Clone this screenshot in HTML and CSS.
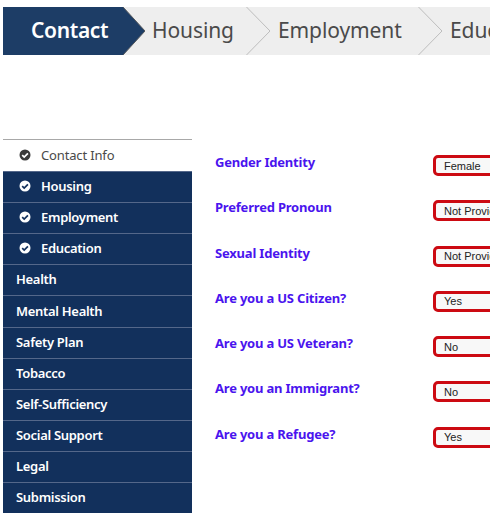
FILE: index.html
```html
<!DOCTYPE html>
<html lang="en">
<head>
<meta charset="utf-8">
<title>Contact</title>
<link rel="stylesheet" href="styles.css">
</head>
<body>
<nav class="steps">
  <div class="step step-active">Contact</div>
  <svg class="tip" width="22" height="48" viewBox="0 0 22 48"><polygon points="0,0 22,24 0,48" fill="#1d3d66"/><polyline points="0,0 22,24 0,48" fill="none" stroke="#55585c" stroke-width="1"/></svg>
  <div class="step step-housing">Housing</div>
  <svg class="chev" width="25" height="48" viewBox="0 0 25 48"><polyline points="0.5,0 24,24 0.5,48" fill="none" stroke="#bdbdbd" stroke-width="1"/></svg>
  <div class="step step-employment">Employment</div>
  <svg class="chev" width="25" height="48" viewBox="0 0 25 48"><polyline points="0.5,0 24,24 0.5,48" fill="none" stroke="#bdbdbd" stroke-width="1"/></svg>
  <div class="step step-education">Education</div>
</nav>
<main class="layout">
  <ul class="side">
    <li class="side-item side-current"><svg class="check" viewBox="0 0 12 12"><circle cx="6" cy="6" r="5.5" fill="#3a3a3a"/><polyline points="3.2,6.2 5.2,8.1 8.9,4.3" fill="none" stroke="#fff" stroke-width="1.7"/></svg>Contact Info</li>
    <li class="side-item"><svg class="check" viewBox="0 0 12 12"><circle cx="6" cy="6" r="5.5" fill="#fff"/><polyline points="3.2,6.2 5.2,8.1 8.9,4.3" fill="none" stroke="#12305c" stroke-width="1.7"/></svg>Housing</li>
    <li class="side-item"><svg class="check" viewBox="0 0 12 12"><circle cx="6" cy="6" r="5.5" fill="#fff"/><polyline points="3.2,6.2 5.2,8.1 8.9,4.3" fill="none" stroke="#12305c" stroke-width="1.7"/></svg>Employment</li>
    <li class="side-item"><svg class="check" viewBox="0 0 12 12"><circle cx="6" cy="6" r="5.5" fill="#fff"/><polyline points="3.2,6.2 5.2,8.1 8.9,4.3" fill="none" stroke="#12305c" stroke-width="1.7"/></svg>Education</li>
    <li class="side-item">Health</li>
    <li class="side-item">Mental Health</li>
    <li class="side-item">Safety Plan</li>
    <li class="side-item">Tobacco</li>
    <li class="side-item">Self-Sufficiency</li>
    <li class="side-item">Social Support</li>
    <li class="side-item">Legal</li>
    <li class="side-item">Submission</li>
  </ul>
  <form class="fields">
    <div class="field"><label class="field-label">Gender Identity</label><select class="field-select"><option>Female</option></select></div>
    <div class="field"><label class="field-label">Preferred Pronoun</label><select class="field-select"><option>Not Provided</option></select></div>
    <div class="field"><label class="field-label">Sexual Identity</label><select class="field-select"><option>Not Provided</option></select></div>
    <div class="field"><label class="field-label">Are you a US Citizen?</label><select class="field-select"><option>Yes</option></select></div>
    <div class="field"><label class="field-label">Are you a US Veteran?</label><select class="field-select"><option>No</option></select></div>
    <div class="field"><label class="field-label">Are you an Immigrant?</label><select class="field-select"><option>No</option></select></div>
    <div class="field"><label class="field-label">Are you a Refugee?</label><select class="field-select"><option>Yes</option></select></div>
  </form>
</main>
</body>
</html>
```
FILE: styles.css
```css
* { box-sizing: border-box; }
html, body { margin: 0; padding: 0; height: 100%; overflow: hidden; background: #fff; }
body { width: 490px; font-family: "Noto Sans", sans-serif; }

.steps {
  display: flex;
  align-items: center;
  height: 48px;
  margin: 7px 0 0 3px;
  width: 520px;
  background: #eeeeee;
  font-size: 21px;
  letter-spacing: -0.1px;
  color: #4a4a4a;
  white-space: nowrap;
}
.step { flex: none; line-height: 46px; height: 48px; }
.step-active {
  width: 120px;
  padding-left: 28px;
  background: #1d3d66;
  color: #fff;
  letter-spacing: -0.35px;
  font-weight: 600;
}
.tip, .chev { flex: none; display: block; }
.step-housing { width: 101px; padding-left: 7px; }
.step-employment { width: 147px; padding-left: 7px; }
.step-education { padding-left: 7px; }

.layout { display: flex; margin: 84px 0 0 3px; }

.side {
  flex: none;
  width: 189px;
  margin: 0;
  padding: 0;
  list-style: none;
  border-top: 1px solid #a8a8a8;
}
.side-item {
  display: flex;
  align-items: center;
  height: 31.1px;
  padding: 0 0 2px 13px;
  background: #12305c;
  border-top: 1px solid #54678a;
  color: #fff;
  font-size: 13px;
  letter-spacing: -0.3px;
  font-weight: 600;
  white-space: nowrap;
}
.side-current {
  background: #fff;
  border-top: 0;
  color: #4a4a4a;
  letter-spacing: -0.15px;
  font-weight: 400;
}
.check { flex: none; width: 12px; height: 12px; margin: 0 10px 0 3px; }

.fields { flex: none; width: 320px; margin-left: 23px; padding-top: 13px; }
.field { display: flex; height: 45.3px; }
.field-label {
  flex: none;
  width: 218px;
  margin-top: 1px;
  color: #4a14ee;
  font-size: 13px;
  letter-spacing: -0.2px;
  font-weight: 700;
  line-height: 18px;
}
.field-select {
  flex: none;
  appearance: none;
  width: 120px;
  height: 21px;
  margin-top: 3px;
  padding: 0 8px;
  border: 3px solid #cc0a12;
  border-radius: 5px;
  background: #f8f8f8;
  color: #222;
  font-family: "Liberation Sans", sans-serif;
  font-size: 11px;
}
```
